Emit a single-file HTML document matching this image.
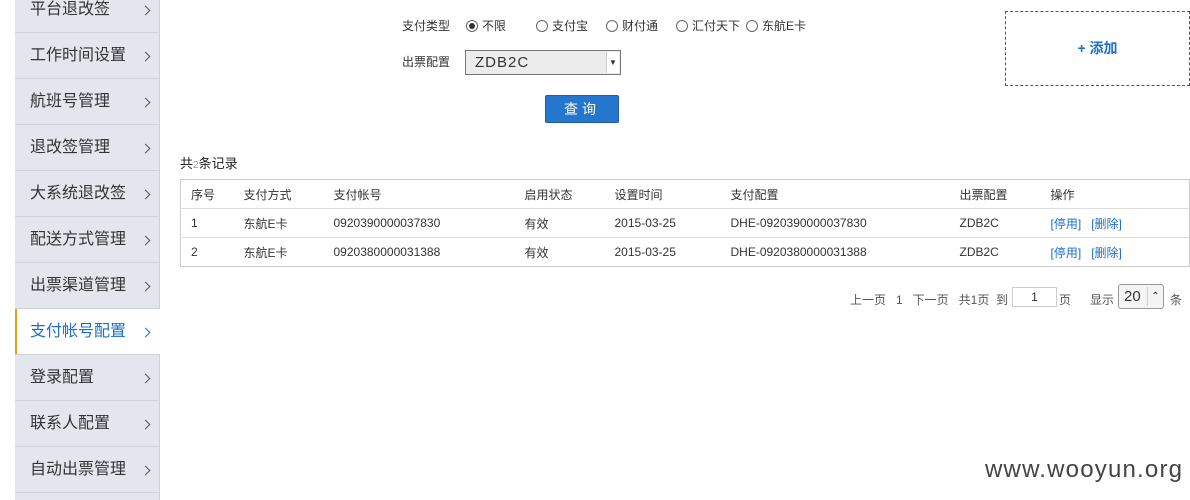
<!DOCTYPE html>
<html><head><meta charset="utf-8"><style>
*{margin:0;padding:0;box-sizing:border-box}
html,body{width:1190px;height:500px;overflow:hidden}
body{background:#fff;font-family:"Liberation Sans","Noto Sans CJK SC",sans-serif;color:#333;position:relative}
.side{position:absolute;left:15px;top:-13px;width:145px;height:513px;overflow:hidden}
.side div{height:46px;background:#e3e7ed;border-bottom:1px solid #cdd2d9;border-right:1px solid #cdd2d9;font-size:16px;color:#333;line-height:46px;padding-left:15px;position:relative}
.side div:after{content:"";position:absolute;right:10px;top:20px;width:6px;height:6px;border-top:1.5px solid #555;border-right:1.5px solid #555;transform:rotate(45deg)}
.side div.act{background:#fff;color:#1a6fc9;border-left:2px solid #f39c12;padding-left:13px;border-right:none}
.side div.act:after{border-color:#1a6fc9;right:11px}
.a{position:absolute;font-size:12px;white-space:nowrap}
.rad{display:inline-block;width:12px;height:12px;border:1px solid #666;border-radius:50%;vertical-align:-2px;margin-right:4px;position:relative}
.rad.on:after{content:"";position:absolute;left:2px;top:2px;width:6px;height:6px;border-radius:50%;background:#333}
table{position:absolute;left:180px;top:179px;width:1010px;border-collapse:collapse;font-size:12px;border:1px solid #ccc}
td{height:29px;padding-left:10px;border-top:1px solid #ddd}
a{color:#1a6fc9;text-decoration:none}
</style></head><body>
<div class="side">
<div>平台退改签</div><div>工作时间设置</div><div>航班号管理</div><div>退改签管理</div><div>大系统退改签</div><div>配送方式管理</div><div>出票渠道管理</div><div class="act">支付帐号配置</div><div>登录配置</div><div>联系人配置</div><div>自动出票管理</div><div></div>
</div>
<div class="a" style="left:402px;top:17px">支付类型</div>
<div class="a" style="left:466px;top:17px"><span class="rad on"></span>不限</div>
<div class="a" style="left:536px;top:17px"><span class="rad"></span>支付宝</div>
<div class="a" style="left:606px;top:17px"><span class="rad"></span>财付通</div>
<div class="a" style="left:676px;top:17px"><span class="rad"></span>汇付天下</div>
<div class="a" style="left:746px;top:17px"><span class="rad"></span>东航E卡</div>
<div class="a" style="left:402px;top:53px">出票配置</div>
<div style="position:absolute;left:465px;top:50px;width:156px;height:25px;border:1px solid #777;background:#ececec;font-size:15px;padding:3px 0 0 9px;letter-spacing:1px">ZDB2C<div style="position:absolute;right:1px;top:1px;width:13px;height:21px;background:#fff;border-left:1px solid #ccc;font-size:8px;text-align:center;line-height:21px;letter-spacing:0">▼</div></div>
<div style="position:absolute;left:545px;top:95px;width:74px;height:28px;background:#2477cc;border:1px solid #1a5fa8;border-radius:2px;color:#fff;font-size:14px;text-align:center;line-height:26px;letter-spacing:4px">查询</div>
<div style="position:absolute;left:1005px;top:11px;width:185px;height:75px;border:1px dashed #555;color:#1a6fc9;font-size:14px;font-weight:bold;text-align:center;line-height:73px">+ 添加</div>
<div class="a" style="left:180px;top:153px;font-size:13px;color:#222">共<span style="font-size:10px;color:#999">2</span>条记录</div>
<table>
<tr><td style="width:53px;border-top:none">序号</td><td style="width:90px;border-top:none">支付方式</td><td style="width:191px;border-top:none">支付帐号</td><td style="width:90px;border-top:none">启用状态</td><td style="width:116px;border-top:none">设置时间</td><td style="width:229px;border-top:none">支付配置</td><td style="width:91px;border-top:none">出票配置</td><td style="border-top:none">操作</td></tr>
<tr><td>1</td><td>东航E卡</td><td>0920390000037830</td><td>有效</td><td>2015-03-25</td><td>DHE-0920390000037830</td><td>ZDB2C</td><td><a>[停用]</a>&nbsp;&nbsp;&nbsp;<a>[删除]</a></td></tr>
<tr><td>2</td><td>东航E卡</td><td>0920380000031388</td><td>有效</td><td>2015-03-25</td><td>DHE-0920380000031388</td><td>ZDB2C</td><td><a>[停用]</a>&nbsp;&nbsp;&nbsp;<a>[删除]</a></td></tr>
</table>
<div class="a" style="left:850px;top:291px;color:#555">上一页&nbsp;&nbsp;&nbsp;1&nbsp;&nbsp;&nbsp;下一页&nbsp;&nbsp;&nbsp;共1页&nbsp;&nbsp;到</div>
<div style="position:absolute;left:1012px;top:287px;width:45px;height:20px;border:1px solid #ccc;font-size:12px;text-align:center;line-height:18px">1</div>
<div class="a" style="left:1059px;top:291px;color:#555">页</div>
<div class="a" style="left:1090px;top:291px;color:#555">显示</div>
<div style="position:absolute;left:1118px;top:284px;width:46px;height:25px;border:1px solid #999;border-radius:3px;background:#f4f4f4;font-size:15px;padding:3px 0 0 5px">20<span style="position:absolute;right:0;top:2px;width:16px;border-left:1px solid #ccc;font-size:10px;text-align:center;height:19px;line-height:19px">⌃</span></div>
<div class="a" style="left:1170px;top:291px;color:#555">条</div>
<div class="a" style="left:985px;top:456px;font-size:24px;color:#444;letter-spacing:1.2px">www.wooyun.org</div>
</body></html>
